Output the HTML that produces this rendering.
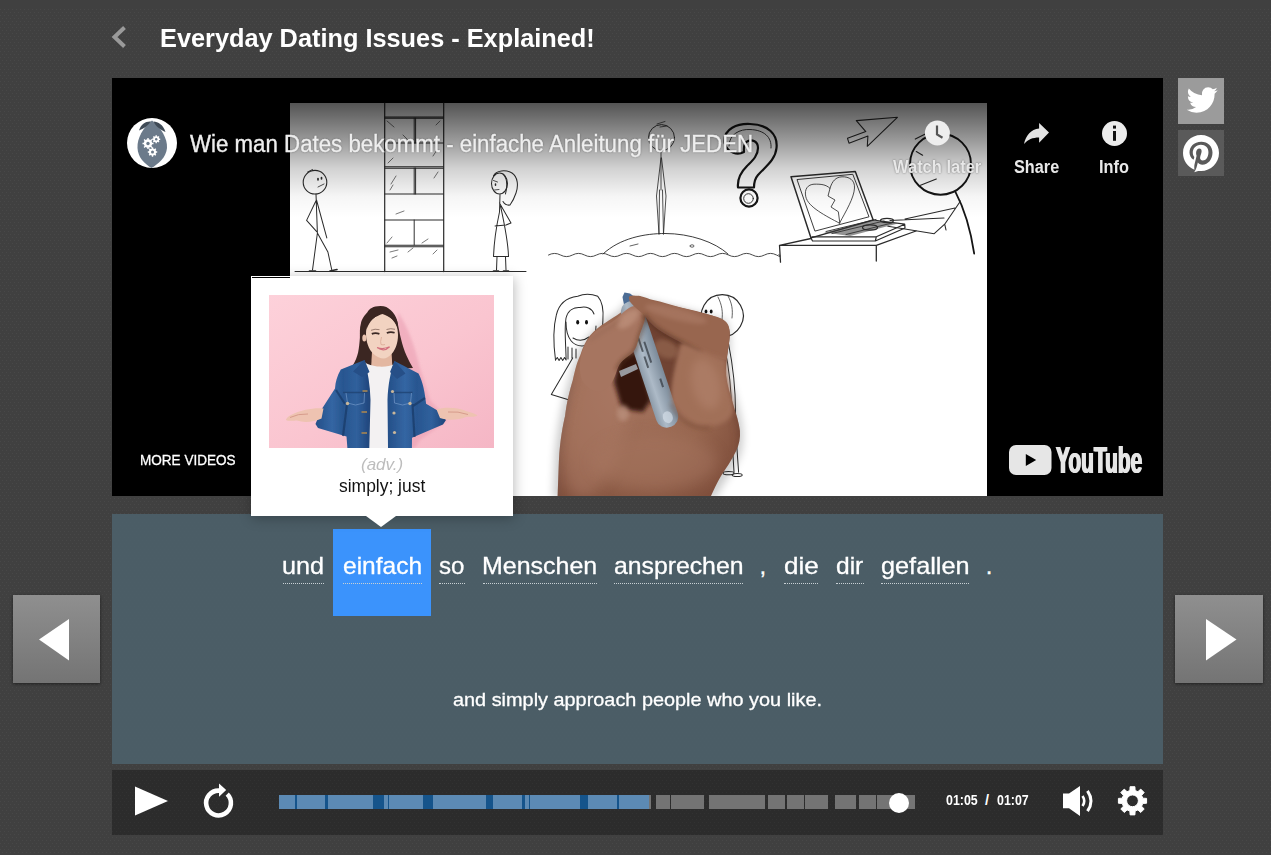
<!DOCTYPE html>
<html lang="en">
<head>
<meta charset="utf-8">
<title>Everyday Dating Issues - Explained!</title>
<style>
*{box-sizing:border-box;margin:0;padding:0}
html,body{width:1271px;height:855px;overflow:hidden}
body{position:relative;background:#404040;font-family:"Liberation Sans",sans-serif;color:#fff}
.abs{position:absolute}
#dots{position:absolute;left:0;top:9px;width:1271px;height:846px}
#video{left:112px;top:78px;width:1051px;height:418px;background:#000;overflow:hidden}
#frame{position:absolute;left:178px;top:25px;width:697px;height:393px;background:#fff}
#ytgrad{position:absolute;left:0;top:0;width:1051px;height:145px;background:linear-gradient(to bottom,rgba(0,0,0,.8) 0,rgba(0,0,0,.67) 25px,rgba(0,0,0,.4) 62px,rgba(0,0,0,.18) 90px,rgba(0,0,0,.04) 118px,rgba(0,0,0,0) 140px)}
#popup{left:251px;top:276px;width:262px;height:240px;background:#fff;box-shadow:1px 2px 12px rgba(0,0,0,.28)}
#arrow{left:366px;top:516px;width:0;height:0;border-left:15px solid transparent;border-right:15px solid transparent;border-top:11px solid #fff}
#cap{left:112px;top:514px;width:1051px;height:250px;background:rgba(77,96,106,.9)}
#hl{left:333px;top:529px;width:98px;height:87px;background:#3b93fc}
.ul{position:absolute;top:583px;height:0;border-top:1px dotted #c8d0d4}
#bar{left:112px;top:770px;width:1051px;height:65px;background:rgba(0,0,0,.3)}
.seg{position:absolute;top:795px;height:14px}
.nav{position:absolute;top:595px;width:88px;height:88px;background:linear-gradient(#8f8f8f,#747474);box-shadow:0 1px 3px rgba(0,0,0,.5)}

.t{position:absolute;white-space:nowrap;line-height:1;transform-origin:0 0;color:#fff}
#title{font-weight:bold}
#yttitle{color:#eee;text-shadow:0 0 2px rgba(0,0,0,.5);-webkit-text-stroke:.35px #eee}
#wl,#share,#info{font-weight:bold;color:#e8e8e8;text-shadow:0 0 2px rgba(0,0,0,.5)}
#ytword{font-weight:bold;color:#e6e6e6;text-shadow:1.3px 0 #e6e6e6,-1.3px 0 #e6e6e6}
#pos{font-style:italic;color:#bdbdbd}
#def{color:#111}
.tm{font-weight:bold}
#w0,#w1,#w2,#w3,#w4,#w5,#w6,#w7,#w8,#w9,#trans,#more{-webkit-text-stroke:.3px #fff}
</style>
</head>
<body>
<svg id="dots"><defs><pattern id="dp" width="4" height="6" patternUnits="userSpaceOnUse"><rect x="0" y="0" width="1" height="1" fill="#484848"/><rect x="2" y="3" width="1" height="1" fill="#484848"/></pattern></defs><rect width="1271" height="846" fill="url(#dp)"/></svg>

<!-- header -->
<svg class="abs" style="left:108px;top:22px" width="24" height="30" viewBox="0 0 24 30"><path d="M16.5 5.5 L6.5 15 L16.5 24.5" fill="none" stroke="#9a9a9a" stroke-width="4"/></svg>
<span class="t" id="title" style="left:160.23px;top:25.0px;font-size:26px;transform:scaleX(0.9736)">Everyday Dating Issues - Explained!</span>

<!-- video -->
<div id="video" class="abs">
  <div id="frame"></div>
  <!--ARTBEGIN--><svg id="art" class="abs" style="left:-112px;top:-78px" width="1271" height="855" viewBox="0 0 1271 855">
<defs>
<filter id="b2" x="-30%" y="-30%" width="160%" height="160%"><feGaussianBlur stdDeviation="2"/></filter>
<filter id="b4" x="-30%" y="-30%" width="160%" height="160%"><feGaussianBlur stdDeviation="4"/></filter>
<filter id="b7" x="-40%" y="-40%" width="180%" height="180%"><feGaussianBlur stdDeviation="7"/></filter>
<radialGradient id="skin" cx="0.42" cy="0.45" r="0.75"><stop offset="0" stop-color="#a5745f"/><stop offset="0.55" stop-color="#97664f"/><stop offset="1" stop-color="#7b4a38"/></radialGradient>
<linearGradient id="pen" x1="0" y1="0" x2="1" y2="0"><stop offset="0" stop-color="#8c9aa8"/><stop offset="0.35" stop-color="#adbac7"/><stop offset="1" stop-color="#7b8a99"/></linearGradient>
<clipPath id="handclip"><path id="handp" d="M557.6 496 L558.9 461 C560 440 563 425 565.1 415.8 C567 400 570 390 572.7 380.5 C575 370 577 362 580.2 355.4 C583 347 586 340 590.3 335.3 C595 330 600 326 605.4 322.7 C611 319 616 316 620.5 312.7 C625 308 628 304 630.5 300.1 C632 297 636 295 640 296 C645 297 649 299 653.2 300.1 C662 302 671 305 680.8 307.6 C691 310 701 312 711 315.2 C717 317 723 319 726 322.7 C729 326 730 331 729.8 335.3 C729.5 342 728 349 727.3 355.4 C726.5 362 725.5 369 726 375.5 C727 386 731 396 733.6 405.7 C736 414 739 422 739.9 430.8 C740.5 438 739 445 736.1 451 C732 460 726 468 721 476 C717 483 714 489 711 496 Z"/></clipPath>
</defs>
<g fill="none" stroke="#2b2b2b" stroke-width="1.01" stroke-linecap="round" stroke-linejoin="round">
<!-- ground + wall -->
<path d="M295 271.6 H526"/>
<path d="M384.7 103 V271.6 M443.7 103 V271.6" stroke-width="1.2"/>
<path d="M384.7 116.9 H443.5 M384.7 118.3 H443.5 M384.7 142.9 H443.5 M384.7 166.8 H443.5 M384.7 168.2 H443.5 M384.7 194.1 H443.5 M384.7 220 H443.5 M384.7 245.3 H443.5 M384.7 246.7 H443.5" stroke-width="1.03"/>
<path d="M414.2 118 V143 M415.6 118 V143 M414.2 168 V194 M415.6 168 V194 M414.2 220 V245" stroke-width="0.98"/>
<path d="M387 121 l7 6 M440 121 l-4 4 M403 135 l5 5 M388 163 l5 -5 M437 150 l-4 6 M396 176 l-5 8 M390 190 l3 -5 M438 172 l-4 6 M396 214 l8 -3 M387 243 l5 -6 M422 243 l6 -4 M390 252 l8 -2 M392 258 l5 -2 M408 252 l5 -4 M437 250 l-4 4" stroke-width="0.63"/>
<!-- man left -->
<circle cx="315" cy="182.2" r="11.8" stroke-width="1.1"/>
<path d="M316 194 L317.4 233 M316 200.7 L306.6 220.4 L316.7 231.6 M316.5 200 L326.8 237.9 M317.4 233 L312.5 270 M317.4 233 L327.9 252 L331.8 270" />
<path d="M309.5 271 h6 M330 271 l7 -1.5" stroke-width="1.66"/>
<path d="M318 178.5 v1.5 M321.5 177.5 v1.5" stroke-width="1.66"/>
<path d="M318 187 l6 -3 M307.5 172 l5 -2.5" stroke-width="0.83"/>
<!-- woman -->
<ellipse cx="499.5" cy="183.5" rx="8" ry="10.5" stroke-width="1.03"/>
<path d="M493.5 176 C496 170 506 169.500 512 173 C518 177 518.500 186 516 193 C514 199 511.500 203 510 205 C507 205.500 504.500 204 503 201.500 M503 174 C507 178 507.500 186 505.500 194" stroke-width="1.03"/>
<path d="M500 194.500 L499.500 212 M499.500 203 L511 223 L506 225 L495 226 M499.500 212 C496 228 494 244 493.500 256.500 L508.500 256.500 C508 240 504 222 500.500 206 M497 257 L496.500 270 M505.500 257 L506 270" stroke-width="1.01"/>
<path d="M493.500 271 h5 M503.500 271 h5" stroke-width="1.56"/>
<path d="M493.500 180.500 l4 1.500 M494.500 190 l4.500 -.5" stroke-width="0.83"/>
<path d="M495.500 184 v1.200" stroke-width="1.49"/>
<!-- sea + island -->
<path d="M548.5 255 q6 -3.2 12 0 t12 0 t12 0 t12 0 t12 0 t12 0 t12 0 t12 0 t12 0 t12 0 t12 0 t12 0 t12 0 t12 0 t12 0 t12 0 t12 0 t12 0 t12 0 t2.5 -.5" stroke-width="0.86"/>
<path d="M603 254 C620 238 645 233.5 665 233.5 C690 233.5 715 242 728 254" stroke-width="0.92"/>
<path d="M630 246 l8 -2 M690 246 a2 1.2 0 1 0 4 0 a2 1.2 0 1 0 -4 0" stroke-width="0.74"/>
<!-- island person -->
<circle cx="661.5" cy="137.6" r="13" stroke-width="0.92"/>
<path d="M661 150.5 L661 190 M661 158 L656.5 196 L659 234 M661.5 158 L666 196 L663.5 234 M659.5 190 L659 234 M662.5 190 L663.5 234" stroke-width="0.83"/>
<path d="M657 124 l8 -2.5 M660 127 l7 -1" stroke-width="0.74"/>
<!-- question mark -->
<path d="M724.5 143 C723 128 738 123.5 750 124 C768 124.5 778 134 776.5 148 C775.5 160 765 167 758 175 C754.5 179 754 183 754 187.5 L738 187.5 C737 178 741 172 747 166 C752 161 758 156 758 148 C758 141 752 139.5 748 141 C744 142.5 743.5 147 744 152 C738 155 728 154 724.5 143 Z" stroke-width="2.2" stroke="#151515"/>
<path d="M729 146 C729 134 740 129 750 129.5 C764 130 772 137 771 148" stroke-width="0.92"/>
<circle cx="749" cy="198" r="8.6" stroke-width="2.2" stroke="#151515"/>
<circle cx="748.5" cy="198.5" r="4.8" stroke-width="0.92"/>
<!-- arrow -->
<path d="M897.4 117.3 L856.3 120.6 L865.8 131.6 L847.5 138.3 L849 143.2 L867.9 136 L867.3 146.3 Z" stroke-width="1.1"/>
<!-- laptop + table -->
<path d="M791 176.8 L855.3 171.6 L873.2 220 L811 237.9 Z" stroke-width="1.47"/>
<path d="M797.4 179.5 L852.8 174.3 L869 216.8 L815.3 231 Z" stroke-width="0.92"/>
<path d="M839.5 223.2 C826 216 808 207 805.8 196.8 C804 189 808 184.5 814 184.2 C821 184 826 184.5 830 188.4 L828 196 L835 200 L831 207 L838 211.5 Z M830 188.4 C832 181 836 177 842 176.8 C849 176.5 855 180 854.5 188 C854 198 846 211 839.5 223.2" stroke-width="0.83"/>
<path d="M811 237.9 L812.5 241 L875.3 241 L905 228 L904.7 224.2 L873.2 220 M875.3 241 L876.3 236.8 L904.7 224.2 M812 236.8 L876.3 236.8" stroke-width="1.2"/>
<path d="M826 231.5 L876 219.5 M832 233.5 L884 221 M846 234.5 L892 223" stroke-width="0.92"/>
<path d="M824 232.500 L874 220.500 L898 223.500 L850 236 Z" fill="#3a3a3a" stroke="none" opacity=".55"/><ellipse cx="870" cy="227.5" rx="7.5" ry="2.6" stroke-width="1.2"/><ellipse cx="887" cy="220.5" rx="6.5" ry="2.2" stroke-width="1.2"/>
<path d="M779.5 245.3 L780.5 262.1 M779.5 245.3 L876.3 245.3 L876.3 261 M779.5 245.3 L811 238.5 M876.3 245.3 L916 231" stroke-width="1.29"/>
<!-- big man right -->
<circle cx="940.5" cy="164.2" r="30.5" stroke-width="1.9" stroke="#151515"/>
<path d="M955.3 191.6 C965 210 971 232 974.2 253.7" stroke-width="1.8" stroke="#151515"/>
<path d="M960.5 201 L944.7 224.2 L934.2 233.7 L887.9 226.3 M944.7 224.2 L946 230 M890 220.5 L944 218 M905 219 L955 208" stroke-width="1.1"/>
<path d="M915.3 139 L925.8 133.7 M916.3 151.6 L922.6 155.2 M920.5 185.3 L936.3 179" stroke-width="1.2"/>
</g>
<!-- lower scene: girl, guy -->
<g fill="none" stroke="#2b2b2b" stroke-width="1.01" stroke-linecap="round" stroke-linejoin="round">
<path d="M555.5 360 C553.5 345 553 328 556.3 315.2 C559 303 568 297.5 577.7 296.3 C584 293.5 592 294 597.8 296.3 C603 302 603.5 312 602.9 320.2 C602.5 330 602 338 601 346"/>
<path d="M555.5 360 l1.8 -2.5 l1.8 3 l1.8 -3 l1.8 3 l1.8 -3 l1.6 2.5 C566 345 564 330 566 318 C568 310 574 307 580 307.5 C586 306 592 308 594 314"/>
<circle cx="580.5" cy="323" r="15" stroke="none"/>
<path d="M566 322 C566 340 574 346 582 346 C590 346 596 338 596 326"/>
<path d="M573 338 q8 5 16 -1" />
<path d="M572.7 358 L551.3 394.4 L567.7 399.4 M568 347 v12 M572 348 v10 M576 349 v9"/>
<path d="M722.3 294.7 a21 21 0 1 1 -0.1 0 Z" stroke-width="1.2"/>
<path d="M718 297 C722 305 723 312 722 320 M728 296 C732 303 733 310 732 318" stroke-width="0.74"/>
<path d="M728.6 344 C733 366 735.5 390 735.5 412 C735.5 434 737.5 455 738.6 472.3 M724.5 346 C729 368 731.5 392 731.5 412 C731.5 434 733 455 734 472" />
<ellipse cx="728.6" cy="473.2" rx="5.5" ry="1.6"/><ellipse cx="737.2" cy="475" rx="5" ry="1.6"/>
</g>
<g fill="#111"><ellipse cx="577.7" cy="322.2" rx="1.5" ry="2.3"/><ellipse cx="586.5" cy="322.2" rx="1.5" ry="2.3"/><ellipse cx="706" cy="311.4" rx="1.4" ry="2"/><ellipse cx="711.2" cy="311.4" rx="1.4" ry="2"/></g>
<g id="hand">
<!-- soft shadow -->
<path d="M553 498 L555 455 C558 420 566 385 578 352 C586 335 600 322 618 312 L632 296 L726 320 C734 335 728 365 730 378 C736 400 746 425 742 448 C738 468 722 482 716 498 Z" fill="#000" opacity=".2" filter="url(#b4)"/>
<!-- pen cap behind -->
<path d="M622.5 297 L624.5 292.5 L630 293.5 L634 296.5 L640 310 L626 315 Z" fill="#4c6c94"/>
<path d="M557.6 496 L558.9 461 C560 440 563 425 565.1 415.8 C567 400 570 390 572.7 380.5 C575 370 577 362 580.2 355.4 C583 347 586 340 590.3 335.3 C595 330 600 326 605.4 322.7 C611 319 616 316 620.5 312.7 C625 308 628 304 630.5 300.1 C632 297 636 295 640 296 C645 297 649 299 653.2 300.1 C662 302 671 305 680.8 307.6 C691 310 701 312 711 315.2 C717 317 723 319 726 322.7 C729 326 730 331 729.8 335.3 C729.5 342 728 349 727.3 355.4 C726.5 362 725.5 369 726 375.5 C727 386 731 396 733.6 405.7 C736 414 739 422 739.9 430.8 C740.5 438 739 445 736.1 451 C732 460 726 468 721 476 C717 483 714 489 711 496 Z" fill="url(#skin)"/>
<g clip-path="url(#handclip)">
 <ellipse cx="598" cy="410" rx="32" ry="90" fill="#ad7d68" opacity=".5" filter="url(#b7)" transform="rotate(12 598 410)"/>
 <ellipse cx="655" cy="462" rx="62" ry="28" fill="#a67661" opacity=".5" filter="url(#b7)"/>
 <path d="M726 322 C732 350 724 372 728 390 C734 415 742 432 738 452 L760 452 L760 320 Z" fill="#60382a" opacity=".5" filter="url(#b4)"/>
 <path d="M557 500 L558 455 L572 380 L562 380 L545 500 Z" fill="#7a5a52" opacity=".5" filter="url(#b4)"/>
 <!-- dark area under index finger / middle finger -->
 <path d="M644 314 L660 326 L684 340 L676 372 L672 402 L650 404 L636 352 Z" fill="#6e4333" opacity=".95" filter="url(#b2)"/>
 <ellipse cx="666" cy="349" rx="13" ry="9" fill="#8c5e4a" opacity=".9" filter="url(#b2)" transform="rotate(25 666 349)"/>
 <!-- hollow between thumb and fingers -->
 <path d="M619 358 L637 351 L651 400 L643 412 L622 409 L614 382 Z" fill="#35170f" filter="url(#b2)"/>
 <path d="M619 371 l17 -7 l2 5 l-17 8 Z" fill="#a9b0b8" opacity=".85"/>
 <ellipse cx="623" cy="413" rx="6" ry="8" fill="#b98f7c" opacity=".8" filter="url(#b2)"/>
</g>
<!-- pen body -->
<g transform="rotate(-18.4 646.2 358)">
 <rect x="636.2" y="299" width="22.5" height="132" rx="10.5" fill="url(#pen)"/>
 <path d="M645 335 v16 M645 356 v12 M649.5 342 v22 M653 382 v9" stroke="#30363d" stroke-width="2" opacity=".7" fill="none"/>
 <ellipse cx="648" cy="421" rx="5" ry="6" fill="#d3dde7" opacity=".7"/>
</g>
<!-- thumb over pen (from left) -->
<path d="M582 352 C586 342 590 336 596 331 C602 327 610 324 616 319 C622 314 626 309 632 306.500 C638 304.500 644 306 645.500 312 C646.500 318 643 326 640 334 C637.500 342 637 350 630 355 C624 359 620 362 617 370 C614 380 610 388 602 391 C594 393 586 388 582 380 C579 372 579 362 582 352 Z" fill="#a67560"/>
<path d="M617 370 C620 362 624 359 630 355 C637 350 637.500 342 640 334 C643 326 646.500 318 645.500 312" fill="none" stroke="#55301f" stroke-width="3" opacity=".65" filter="url(#b2)"/>
<ellipse cx="628" cy="319" rx="13" ry="6.500" fill="#c0937e" opacity=".7" filter="url(#b2)" transform="rotate(-40 628 319)"/>
<path d="M590 340 C600 332 612 328 620 320" fill="none" stroke="#8a5f4c" stroke-width="2" opacity=".5" filter="url(#b2)"/>
<!-- index finger top segment -->
<path d="M630 296 C636 294 644 298 650 300 C660 303 670 305 680 307.500 C690 310 700 312.500 710 315 C716 316.500 722 318 725 321 C729 324 730 329 729.500 336 C729 344 728 352 726 360 L700 353 C692 349 686 345 680 342 C672 338 665 334 659 330 C653 326 648 320 644 315 C640 311 634 307 631 303 C629 300 628 297 630 296 Z" fill="#98664f"/>
<path d="M644 315 C648 320 653 326 659 330 C665 334 672 338 680 342 C686 345 692 349 700 353" fill="none" stroke="#4e2a1b" stroke-width="3.500" opacity=".65" filter="url(#b2)"/>
<ellipse cx="676" cy="314" rx="32" ry="6" fill="#ad7d67" opacity=".6" filter="url(#b2)" transform="rotate(14 676 314)"/>
<!-- index 2nd segment -->
<path d="M681 343 C690 346 704 352 726 360 C726 368 727 376 729 386 C731 396 734 404 733 412 C730 422 716 428 702 426 C690 424 680 414 673 402 C671 392 672 382 675 370 C677 360 679 350 681 343 Z" fill="#a16f59" filter="url(#b2)"/>
<ellipse cx="706" cy="384" rx="14" ry="26" fill="#b4846e" opacity=".55" filter="url(#b4)" transform="rotate(-14 706 384)"/>
<path d="M671 404 C678 420 694 430 710 427" fill="none" stroke="#6a3f2c" stroke-width="3" opacity=".45" filter="url(#b2)"/>
</g>

</svg>
<!--ARTEND-->
  <div id="ytgrad"></div>
</div>
<!--YTIBEGIN--><svg class="abs" style="left:112px;top:78px" width="1051" height="418" viewBox="112 78 1051 418">
<!-- avatar -->
<circle cx="152" cy="143" r="25" fill="#fff"/>
<path d="M152 120.500 C143 128 137 138 137.500 148 C138 158 145 164 151.500 168 C158 164 166 158 167 148 C167.500 138 161 128 152 120.500 Z" fill="#6b7a8a"/>
<path d="M151 121.500 C146 121 141 124 139 130.500 C143 129 148 126 151 121.500 Z M153.500 121.500 C158 121.500 163.500 125 165.500 132 C161 130 156 127 153.500 121.500 Z" fill="#3f4a56"/>
<g fill="#fff"><circle cx="148" cy="143.500" r="4.200"/><circle cx="156.200" cy="139.200" r="3"/><circle cx="152.500" cy="152" r="3.600"/></g>
<g fill="#6b7a8a"><circle cx="148" cy="143.500" r="1.700"/><circle cx="156.200" cy="139.200" r="1.200"/><circle cx="152.500" cy="152" r="1.500"/></g>
<g stroke="#fff" stroke-width="1.400" fill="none"><path d="M148 138 v11 M142.500 143.500 h11 M144.100 139.600 l7.800 7.800 M151.900 139.600 l-7.800 7.800"/><path d="M156.200 135.200 v8 M152.200 139.200 h8 M153.400 136.400 l5.600 5.600 M159 136.400 l-5.600 5.600"/><path d="M152.500 147.300 v9.400 M147.800 152 h9.400 M149.200 148.700 l6.600 6.600 M155.800 148.700 l-6.600 6.600"/></g>
<g fill="#6b7a8a"><circle cx="148" cy="143.500" r="1.700"/><circle cx="156.200" cy="139.200" r="1.200"/><circle cx="152.500" cy="152" r="1.500"/></g>
<!-- watch later -->
<circle cx="937.400" cy="133" r="12.500" fill="#eee"/>
<path d="M937 125.500 V134.500 L942.500 137.800" fill="none" stroke="#555" stroke-width="2.200"/>
<!-- share -->
<path d="M1049 132.600 L1039.100 123 V128.500 C1031 129.500 1026 135 1024 144 C1028 139.500 1032.500 137.500 1039.100 137.500 V142.800 Z" fill="#e4e4e4"/>
<!-- info -->
<circle cx="1114.500" cy="133.500" r="12.500" fill="#ececec"/>
<rect x="1113" y="131" width="3" height="9.800" fill="#111"/><rect x="1113" y="125.600" width="3" height="3" fill="#111"/>
<!-- youtube logo -->
<rect x="1009" y="445" width="42.500" height="30" rx="7" ry="7" fill="#e6e6e6"/>
<path d="M1025.800 454 L1036.200 460 L1025.800 466 Z" fill="#000"/>
</svg>
<!--YTIEND-->
<span class="t" id="yttitle" style="left:190.0px;top:132.5px;font-size:23.5px;transform:scaleX(0.9476)">Wie man Dates bekommt - einfache Anleitung für JEDEN</span>
<span class="t" id="wl" style="left:893.0px;top:158.2px;font-size:18px;transform:scaleX(0.9163)">Watch later</span>
<span class="t" id="share" style="left:1013.77px;top:158.4px;font-size:18px;transform:scaleX(0.9034)">Share</span>
<span class="t" id="info" style="left:1098.77px;top:158.4px;font-size:18px;transform:scaleX(0.9072)">Info</span>
<span class="t" id="more" style="left:139.6px;top:452.1px;font-size:15px;transform:scaleX(0.9035)">MORE VIDEOS</span>
<span class="t" id="ytword" style="left:1056px;top:442.4px;font-size:37.6px;transform:scaleX(0.556)">YouTube</span>

<!-- caption panel -->
<div id="cap" class="abs"></div>
<div id="hl" class="abs"></div>
<span class="t" id="w0" style="left:282.18px;top:554.4px;font-size:24px;transform:scaleX(1.0518)">und</span>
<div class="ul" style="left:283px;width:41px"></div>
<span class="t" id="w1" style="left:342.68px;top:554.4px;font-size:24px;transform:scaleX(1.0213)">einfach</span>
<div class="ul" style="left:343px;width:79px"></div>
<span class="t" id="w2" style="left:439.11px;top:554.4px;font-size:24px;transform:scaleX(1.0016)">so</span>
<div class="ul" style="left:439px;width:26px"></div>
<span class="t" id="w3" style="left:482.15px;top:554.4px;font-size:24px;transform:scaleX(1.0404)">Menschen</span>
<div class="ul" style="left:483px;width:114px"></div>
<span class="t" id="w4" style="left:614.29px;top:554.4px;font-size:24px;transform:scaleX(1.032)">ansprechen</span>
<div class="ul" style="left:614px;width:129px"></div>
<span class="t" id="w5" style="left:759.5px;top:554.4px;font-size:24px;transform:scaleX(1)">,</span>
<span class="t" id="w6" style="left:784.38px;top:554.4px;font-size:24px;transform:scaleX(1.0846)">die</span>
<div class="ul" style="left:784px;width:34px"></div>
<span class="t" id="w7" style="left:836.46px;top:554.4px;font-size:24px;transform:scaleX(1.0231)">dir</span>
<div class="ul" style="left:836px;width:28px"></div>
<span class="t" id="w8" style="left:881.47px;top:554.4px;font-size:24px;transform:scaleX(1.053)">gefallen</span>
<div class="ul" style="left:881px;width:88px"></div>
<span class="t" id="w9" style="left:985.8px;top:554.4px;font-size:24px;transform:scaleX(1)">.</span>
<span class="t" id="trans" style="left:453.0px;top:689.6px;font-size:19px;transform:scaleX(1.046)">and simply approach people who you like.</span>

<!-- popup -->
<div id="popup" class="abs">
  <!--PHOTOBEGIN--><div class="abs" style="left:1px;top:1px;width:38px;height:1px;background:#000"></div><svg class="abs" style="left:18px;top:19px" width="225" height="153" viewBox="269 295 225 153">
<defs>
<linearGradient id="pk" x1="0" y1="0" x2="1" y2="1"><stop offset="0" stop-color="#fdd1da"/><stop offset=".55" stop-color="#fac5d0"/><stop offset="1" stop-color="#f5b6c5"/></linearGradient>
<linearGradient id="dn" x1="0" y1="0" x2="1" y2="0"><stop offset="0" stop-color="#244f88"/><stop offset=".3" stop-color="#3466a3"/><stop offset=".5" stop-color="#285690"/><stop offset=".75" stop-color="#30609c"/><stop offset="1" stop-color="#1f447a"/></linearGradient>
<filter id="pb" x="-10%" y="-10%" width="120%" height="120%"><feGaussianBlur stdDeviation=".55"/></filter>
<filter id="pb2" x="-20%" y="-20%" width="140%" height="140%"><feGaussianBlur stdDeviation="1.6"/></filter>
</defs>
<rect x="269" y="295" width="225" height="153" fill="url(#pk)"/>
<g filter="url(#pb)">
<!-- soft shadow on wall -->
<path d="M398 312 C410 330 416 352 420 368 L430 400 L448 420 L420 440 L415 448 L395 448 Z" fill="#e99cb0" opacity=".55" filter="url(#pb2)"/>
<!-- hair -->
<path d="M380.5 306 C373 306 369 309 367.4 312.2 C363 317 361.500 320 360.900 323.400 C359.500 328 360 333 359.900 337.400 C359.500 343 359 348 358.100 352.400 C357 357 355.500 361 353 365 L366 369 L394 369 L413 368 C410.500 364 408.500 360 406.700 356.100 C404 350 402.500 345 401.100 339.300 C399.500 333 398.500 327 397.400 321.500 C396 316 393.500 313 390.800 310.300 C388 307.500 385 306 380.500 306 Z" fill="#3b2622"/>
<!-- neck -->
<path d="M372 352 L391.500 352 L392.500 369 L371 369 Z" fill="#e3b7a1"/>
<!-- face -->
<path d="M366 334 C366 326 369 321 373 318.500 C376 316.500 379.500 315 382.400 314 C386 315 389.500 317 392.500 319.500 C396 322.500 398 328 398 335 C398 343 395.500 349.500 392 353.500 C389 357 386 358.500 383.500 358.500 C380.500 358.500 376.500 357 373 353.500 C369 349.500 366 342 366 334 Z" fill="#f2d3c1"/>
<ellipse cx="364.3" cy="338" rx="2" ry="3.600" fill="#ecc4b0"/>
<path d="M381.500 313.500 C375 316 369.500 321 366.500 329.500 C365.500 323 368 315 374 311.500 Z M383.500 313.500 C389 315.500 395 320.500 398 329 C398.500 321 395 314 389 311 Z" fill="#3b2622"/>
<path d="M371.800 333.900 q3.600 -1.600 7.600 0 M386.800 333 q3.800 -1.600 7.800 -.2" stroke="#3a2a26" stroke-width="1.700" fill="none"/>
<path d="M371 330.300 q4 -1.800 8.500 -.600 M386.500 329.500 q4.200 -1.500 8.500 -.2" stroke="#6a4c42" stroke-width=".8" fill="none" opacity=".8"/>
<path d="M381.500 337 q-1.500 5 -.5 7.500 q2 .8 4 0" stroke="#dcae9a" stroke-width=".9" fill="none"/>
<path d="M377.200 347.600 q6 2.200 12.400 -.800 q-5.600 5.600 -12.400 .800 Z" fill="#fff" stroke="#d2707c" stroke-width="1.200"/>
<!-- shirt -->
<path d="M365 362.5 C372 367.5 388 368 394 364 L390 448 L368 448 Z" fill="#f3f1f2"/>
<!-- jacket left (viewer) -->
<path d="M364.5 360 L340.800 369.600 C337 376 335.500 382 335 388.500 L321.500 409.500 L315.500 424 L318 428 L346.500 436.500 L347.400 448 L369.300 448 L370.500 400 C370 385 368 372 364.500 360 Z" fill="url(#dn)"/>
<!-- jacket right -->
<path d="M394.500 361 L418.500 373.400 C423 382 425 393 426.100 403.700 L437.500 410.500 L446 420 L443 424.500 L412 437.800 L411.900 448 L388 448 L387.500 400 C388 385 390.500 372 394.500 361 Z" fill="url(#dn)"/>
<!-- collar + folds -->
<path d="M364.500 360 L353 371.500 L362 377 L369.500 372 Z M394.500 361 L405.500 373.500 L397 379 L390 372 Z" fill="#274f87"/>
<path d="M347 404 L343 436 M412.500 404 L414.500 437 M336 390 L345 404 M425 398 L413 406" stroke="#1b3b68" stroke-width="2.200" fill="none" opacity=".75"/>
<path d="M343 392.500 h25 M390.500 392.500 h22" stroke="#1f4272" stroke-width="1.600" fill="none" opacity=".8"/>
<path d="M346 393 l1.500 10 l8 2 l8.500 -2 l.5 -10 M394 393 l.5 10 l8 2 l8 -2 l1 -10" stroke="#6f95c6" stroke-width=".9" fill="none" opacity=".8"/>
<g fill="#c9b79a"><circle cx="347.500" cy="403.500" r="1.700"/><circle cx="410" cy="403.500" r="1.700"/><circle cx="392.500" cy="391.500" r="1.600"/><circle cx="394" cy="413" r="1.600"/><circle cx="394.500" cy="432.500" r="1.600"/></g>
<path d="M362.500 391 h5 M361.500 412 h5.500 M361.500 433 h5.500" stroke="#8d7a5c" stroke-width="1.800"/>
<!-- hands -->
<path d="M323.500 408.500 C315 407.500 302 409.500 292 414.500 C288.500 416 286 418.500 286 420 C289 421.500 294 420.500 297 420.500 C304 423 314 422 321.500 418.500 Z" fill="#eec3b1"/>
<path d="M436.500 409.500 C446 406.500 458 408 466 411 C470 412.500 475.500 413.500 477.500 415.500 C474 417.500 469 416.500 466 417 C458 420.500 447 420.500 440 418 Z" fill="#eec3b1"/>
<path d="M290 417.500 q8 -4 18 -3.500 M448 412 q10 -1 20 2.500" stroke="#d79c8c" stroke-width="1" fill="none"/>
</g>
</svg>
<!--PHOTOEND-->
</div>
<div id="arrow" class="abs"></div>
<span class="t" id="pos" style="left:360.78px;top:456.0px;font-size:17px;transform:scaleX(1.0006)">(adv.)</span>
<span class="t" id="def" style="left:339.2px;top:477.4px;font-size:18px;transform:scaleX(0.9691)">simply; just</span>

<!-- control bar -->
<div id="bar" class="abs"></div>
<div class="seg" style="left:279px;width:370px;background:#15548b"></div>
<div class="seg" style="left:279px;width:16px;background:#5c8ab4"></div>
<div class="seg" style="left:297px;width:28px;background:#5c8ab4"></div>
<div class="seg" style="left:328px;width:45px;background:#5c8ab4"></div>
<div class="seg" style="left:384px;width:4px;background:#5c8ab4"></div>
<div class="seg" style="left:389px;width:34px;background:#5c8ab4"></div>
<div class="seg" style="left:433px;width:53px;background:#5c8ab4"></div>
<div class="seg" style="left:493px;width:29px;background:#5c8ab4"></div>
<div class="seg" style="left:525px;width:4px;background:#5c8ab4"></div>
<div class="seg" style="left:530px;width:50px;background:#5c8ab4"></div>
<div class="seg" style="left:588px;width:29px;background:#5c8ab4"></div>
<div class="seg" style="left:619px;width:30px;background:#5c8ab4"></div>
<div class="seg" style="left:649px;width:2px;background:#747474"></div>
<div class="seg" style="left:656px;width:14px;background:#747474"></div>
<div class="seg" style="left:671px;width:33px;background:#747474"></div>
<div class="seg" style="left:709px;width:56px;background:#747474"></div>
<div class="seg" style="left:768px;width:17px;background:#747474"></div>
<div class="seg" style="left:787px;width:17px;background:#747474"></div>
<div class="seg" style="left:805px;width:23px;background:#747474"></div>
<div class="seg" style="left:835px;width:21px;background:#747474"></div>
<div class="seg" style="left:859px;width:17px;background:#747474"></div>
<div class="seg" style="left:877px;width:38px;background:#747474"></div>
<div class="abs" style="left:889px;top:793px;width:20px;height:20px;border-radius:50%;background:#fff"></div>
<span class="t tm" id="time1" style="left:946px;top:793.0px;font-size:14.6px;transform:scaleX(.85)">01:05</span><span class="t tm" id="time2" style="left:985px;top:793.0px;font-size:14.6px;transform:scaleX(1)">/</span><span class="t tm" id="time3" style="left:997px;top:793.0px;font-size:14.6px;transform:scaleX(.85)">01:07</span>
<svg class="abs" style="left:130px;top:780px" width="44" height="44" viewBox="130 780 44 44"><path d="M135 786.5 L168 801 L135 815.5 Z" fill="#fff"/></svg>
<svg class="abs" style="left:198px;top:778px" width="44" height="46" viewBox="198 778 44 46"><path d="M227.2 794.1 A12.4 12.4 0 1 1 219.2 790.6" fill="none" stroke="#fff" stroke-width="4.6"/><path d="M219 783.4 L226.2 790 L219 796.7 Z" fill="#fff"/></svg>
<svg class="abs" style="left:1058px;top:782px" width="40" height="38" viewBox="1058 782 40 38"><path d="M1063 793.5 H1069 L1080 786 V816 L1069 808.2 H1063 Z" fill="#fff"/><path d="M1082.5 796 Q1086 801 1082.5 806" fill="none" stroke="#fff" stroke-width="2.6"/><path d="M1087.5 790.8 Q1094.5 801 1087.5 811.2" fill="none" stroke="#fff" stroke-width="3"/></svg>
<svg class="abs" style="left:1114px;top:782px" width="38" height="38" viewBox="1114 782 38 38"><path d="M1129.88 790.53 L1130.08 786.71 L1134.92 786.71 L1135.12 790.53 L1137.91 791.68 L1140.76 789.12 L1144.18 792.54 L1141.62 795.39 L1142.77 798.18 L1146.59 798.38 L1146.59 803.22 L1142.77 803.42 L1141.62 806.21 L1144.18 809.06 L1140.76 812.48 L1137.91 809.92 L1135.12 811.07 L1134.92 814.89 L1130.08 814.89 L1129.88 811.07 L1127.09 809.92 L1124.24 812.48 L1120.82 809.06 L1123.38 806.21 L1122.23 803.42 L1118.41 803.22 L1118.41 798.38 L1122.23 798.18 L1123.38 795.39 L1120.82 792.54 L1124.24 789.12 L1127.09 791.68 Z M1138.4 800.8 A5.9 5.9 0 1 0 1126.6 800.8 A5.9 5.9 0 1 0 1138.4 800.8 Z" fill="#fff" fill-rule="evenodd" stroke="#fff" stroke-width="1" stroke-linejoin="round"/></svg>

<!-- side nav -->
<div class="nav" style="left:13px;width:87px"><svg width="88" height="88"><path d="M26 44.5 L56 24 L56 65.5 Z" fill="#fff"/></svg></div>
<div class="nav" style="left:1175px"><svg width="88" height="88"><path d="M61.5 44.5 L31 24 L31 65.5 Z" fill="#fff"/></svg></div>
<div class="abs" style="left:1178px;top:78px;width:46px;height:46px;background:#9b9b9b"><svg width="46" height="46" viewBox="0 0 46 46"><path transform="translate(7.35,5.56) scale(1.37)" d="M23.64 4.94c-.83.37-1.73.62-2.67.73a4.66 4.66 0 0 0 2.05-2.57 9.3 9.3 0 0 1-2.96 1.13A4.65 4.65 0 0 0 16.67 2.76a4.66 4.66 0 0 0-4.54 5.72A13.22 13.22 0 0 1 2.53 3.62a4.66 4.66 0 0 0 1.44 6.22 4.63 4.63 0 0 1-2.11-.58v.06a4.66 4.66 0 0 0 3.74 4.57 4.7 4.7 0 0 1-2.1.08 4.66 4.66 0 0 0 4.35 3.23A9.35 9.35 0 0 1 .96 19.13a13.18 13.18 0 0 0 7.14 2.1c8.57 0 13.25-7.1 13.25-13.25 0-.2 0-.4-.01-.6a9.46 9.46 0 0 0 2.3-2.44z" fill="#fff"/></svg></div>
<div class="abs" style="left:1178px;top:130px;width:46px;height:46px;background:#5a5a5a"><svg width="46" height="46" viewBox="0 0 46 46"><path transform="translate(5,5) scale(1.5)" d="M12 0C5.373 0 0 5.373 0 12c0 5.084 3.163 9.426 7.627 11.174-.105-.949-.2-2.405.042-3.441.218-.937 1.407-5.965 1.407-5.965s-.359-.719-.359-1.782c0-1.668.967-2.914 2.171-2.914 1.023 0 1.518.769 1.518 1.690 0 1.029-.655 2.568-.994 3.995-.283 1.194.599 2.169 1.777 2.169 2.133 0 3.772-2.249 3.772-5.495 0-2.873-2.064-4.882-5.012-4.882-3.414 0-5.418 2.561-5.418 5.207 0 1.031.397 2.138.893 2.738.098.119.112.224.083.345l-.333 1.360c-.053.220-.174.267-.402.161-1.499-.698-2.436-2.889-2.436-4.649 0-3.785 2.750-7.262 7.929-7.262 4.163 0 7.398 2.967 7.398 7.285 0 4.504-2.840 8.129-6.782 8.129-1.324 0-2.569-.688-2.995-1.501l-.815 3.108c-.295 1.136-1.092 2.560-1.625 3.428C9.562 23.812 10.756 24 12 24c6.627 0 12-5.373 12-12S18.627 0 12 0z" fill="#fff"/></svg></div>
</body>
</html>
